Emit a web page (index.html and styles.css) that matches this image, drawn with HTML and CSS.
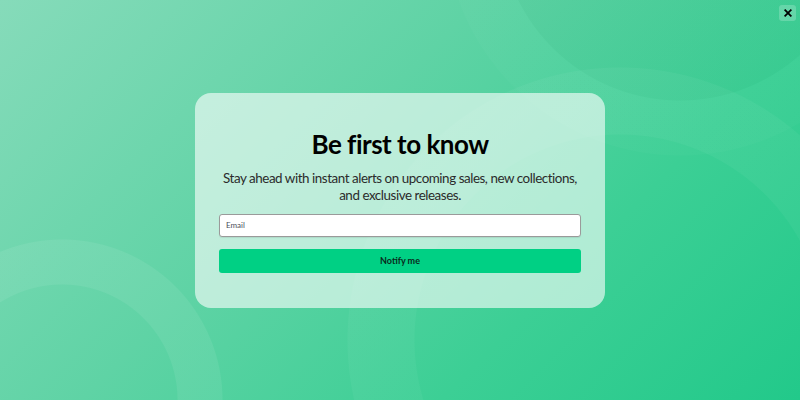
FILE: index.html
```html
<!DOCTYPE html>
<html lang="en">
<head>
<meta charset="utf-8">
<title>Be first to know</title>
<link rel="stylesheet" href="styles.css">
</head>
<body>
<div class="page">
  <button class="close" aria-label="Close">
    <svg viewBox="0 0 10 10" width="8" height="8"><path d="M1.5 1.5 L8.5 8.5 M8.5 1.5 L1.5 8.5" stroke="#000" stroke-width="2.2" stroke-linecap="square"/></svg>
  </button>
  <div class="card">
    <h1 class="title">Be first to know</h1>
    <p class="subtitle">Stay ahead with instant alerts on upcoming sales, new collections, and exclusive releases.</p>
    <form class="form">
      <input class="email" type="email" placeholder="Email">
      <button class="notify" type="button">Notify me</button>
    </form>
  </div>
</div>
</body>
</html>
```
FILE: styles.css
```css
html, body {
  margin: 0;
  padding: 0;
}
body {
  font-family: Lato, "Noto Sans", sans-serif;
}
.page {
  position: relative;
  width: 800px;
  height: 400px;
  overflow: hidden;
  display: flex;
  align-items: center;
  justify-content: center;
  background:
    radial-gradient(circle at 62px 400px, transparent 115px, rgba(255,255,255,0.07) 116px, rgba(255,255,255,0.07) 160px, transparent 161px),
    radial-gradient(circle at 620px 340px, transparent 205px, rgba(255,255,255,0.04) 206px, rgba(255,255,255,0.04) 272px, transparent 273px),
    radial-gradient(circle at 680px -80px, rgba(0,60,30,0.025) 180px, rgba(255,255,255,0.02) 181px, rgba(255,255,255,0.02) 235px, transparent 236px),
    linear-gradient(135deg, #86dbba 0%, #5fd3a5 40%, #3ccf95 70%, #22c98a 100%);
}
.close {
  position: absolute;
  top: 5px;
  right: 4px;
  width: 17px;
  height: 16px;
  padding: 0;
  border: none;
  border-radius: 3px;
  background: rgba(255,255,255,0.2);
  display: flex;
  align-items: center;
  justify-content: center;
  cursor: pointer;
}
.card {
  box-sizing: border-box;
  width: 410px;
  padding: 35px 24px 35px;
  border-radius: 16px;
  background: rgba(255,255,255,0.6);
  text-align: center;
}
.title {
  margin: 0;
  font-size: 26px;
  line-height: 32px;
  font-weight: 700;
  letter-spacing: -0.5px;
  color: #000;
}
.subtitle {
  margin: 10px 0 0;
  font-size: 13.4px;
  line-height: 17px;
  letter-spacing: -0.45px;
  color: #2b2b2b;
}
.form {
  margin-top: 10px;
  display: flex;
  flex-direction: column;
  gap: 12px;
}
.email {
  box-sizing: border-box;
  width: 100%;
  height: 23px;
  padding: 0 6px;
  border: 1px solid #9a9a9a;
  border-radius: 3px;
  background: #fff;
  font-family: Lato, sans-serif;
  font-size: 8px;
  color: #333;
  box-shadow: 0 1px 1px rgba(0,0,0,0.08);
}
.email::placeholder {
  color: #4a4f5a;
}
.notify {
  box-sizing: border-box;
  width: 100%;
  height: 24px;
  border: none;
  border-radius: 3px;
  background: #00d084;
  font-family: Lato, sans-serif;
  font-size: 9px;
  font-weight: 700;
  color: #0a2a1c;
  cursor: pointer;
}
```
